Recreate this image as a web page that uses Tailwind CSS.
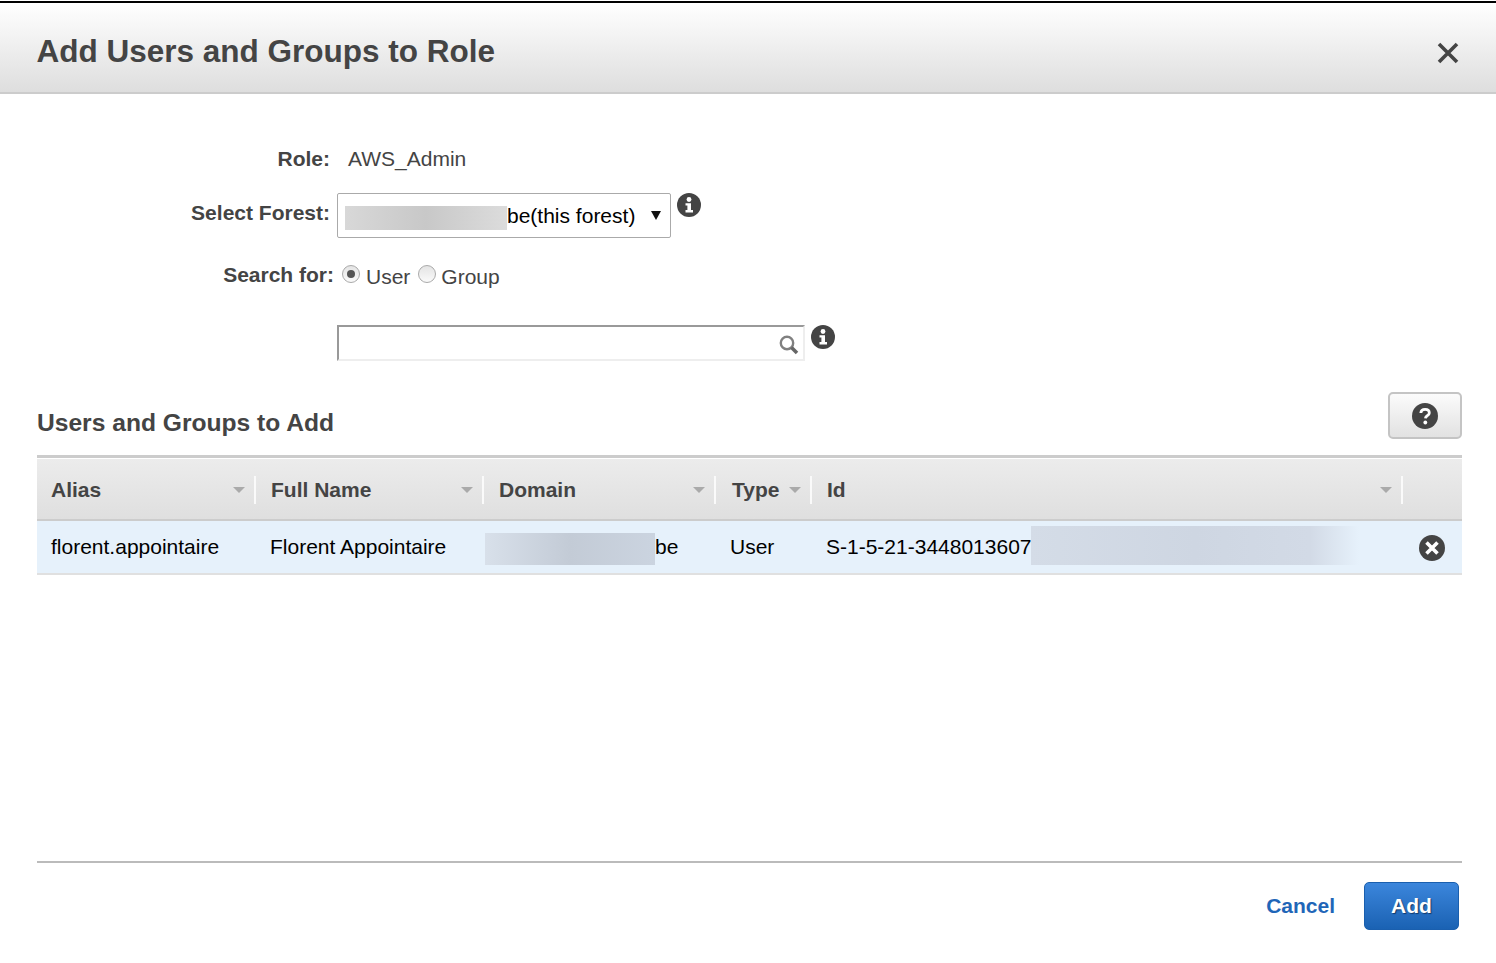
<!DOCTYPE html>
<html>
<head>
<meta charset="utf-8">
<script src="https://cdn.jsdelivr.net/npm/@tailwindcss/browser@4"></script>
</head>
<body class="bg-white font-['Liberation_Sans',Arial,sans-serif] text-[#444]">
<div class="w-[1496px] h-[963px] overflow-hidden flex flex-col">
  <div class="h-px shrink-0 bg-white"></div>
  <div class="h-[2px] shrink-0 bg-black"></div>
  <header class="h-[91px] shrink-0 flex items-center justify-between pl-[36.5px] pr-[36px] bg-gradient-to-b from-white to-[#dedede] border-b-2 border-[#ccc]">
    <h1 class="text-[31.5px] font-bold text-[#444] leading-none pt-[8px]">Add Users and Groups to Role</h1>
    <svg width="24" height="24" viewBox="0 0 24 24" class="mt-[10px]"><path d="M3 3L21 21M21 3L3 21" stroke="#444" stroke-width="3.6" fill="none"/></svg>
  </header>

  <main class="flex-1 flex flex-col px-[34px] pl-[37px]">
    <section class="mt-[49px] flex flex-col">
      <div class="h-8 flex items-center text-[21px]">
        <span class="w-[293px] text-right font-bold">Role:</span>
        <span class="ml-[18px]">AWS_Admin</span>
      </div>
      <div class="mt-[18px] h-[45px] flex items-start text-[21px]">
        <span class="w-[293px] text-right font-bold leading-[40px]">Select Forest:</span>
        <div class="ml-[7px] w-[334px] h-[45px] flex items-center border border-[#aaa] rounded-[2px] text-black">
          <span class="ml-[7px] mt-[5px] w-[162px] h-6 bg-gradient-to-r from-[#d8d8d8] via-[#c8c8c8] to-[#dcdcdc]"></span>
          <span class="mt-[1px]">be(this forest)</span>
          <svg width="10" height="9" viewBox="0 0 10 9" class="ml-[16px]"><path d="M0 0H10L5 9Z" fill="#111"/></svg>
        </div>
        <svg width="24" height="24" viewBox="0 0 24 24" class="ml-[6px]"><circle cx="12" cy="12" r="12" fill="#444"/><circle cx="12" cy="6.5" r="2.4" fill="#fff"/><path d="M8.5 10.2H14V17H16V19.5H8.5V17H10.4V12.6H8.5Z" fill="#fff"/></svg>
      </div>
      <div class="mt-[21px] h-8 flex items-center text-[21px]">
        <span class="w-[297px] text-right font-bold">Search for:</span>
        <span class="ml-[8px] mt-[-2px] w-[18px] h-[18px] rounded-full border border-[#aaa] bg-gradient-to-b from-[#e4e4e4] to-[#fafafa] flex items-center justify-center"><span class="w-2 h-2 rounded-full bg-[#555]"></span></span>
        <span class="ml-[6px] mt-[4px]">User</span>
        <span class="ml-[8px] mt-[-2px] w-[18px] h-[18px] rounded-full border border-[#aaa] bg-gradient-to-b from-[#e4e4e4] to-[#fafafa]"></span>
        <span class="ml-[5px] mt-[4px]">Group</span>
      </div>
      <div class="mt-[34px] ml-[300px] h-9 flex items-start">
        <div class="w-[468px] h-9 flex items-center justify-end pr-[4px] border-2 border-t-[#999] border-l-[#999] border-r-[#eee] border-b-[#eee]">
          <svg width="20" height="20" viewBox="0 0 20 20" class="mt-[3px]"><circle cx="8" cy="8" r="6.2" fill="none" stroke="#808080" stroke-width="2.4"/><path d="M12.5 12.5L18 18" stroke="#666" stroke-width="3.6"/></svg>
        </div>
        <svg width="24" height="24" viewBox="0 0 24 24" class="ml-[6px]"><circle cx="12" cy="12" r="12" fill="#444"/><circle cx="12" cy="6.5" r="2.4" fill="#fff"/><path d="M8.5 10.2H14V17H16V19.5H8.5V17H10.4V12.6H8.5Z" fill="#fff"/></svg>
      </div>
    </section>

    <section class="mt-[31px]">
      <div class="h-[47px] flex items-start justify-between">
        <h2 class="text-[24.6px] font-bold leading-none mt-[19px]">Users and Groups to Add</h2>
        <button class="w-[74px] h-[47px] flex items-center justify-center rounded-[5px] border-2 border-[#c4c4c4] bg-gradient-to-b from-[#fbfbfb] to-[#e2e2e2]">
          <svg width="26" height="26" viewBox="0 0 26 26" class="mt-[1px]"><circle cx="13" cy="13" r="13" fill="#444"/><path d="M8.8 10C9 7.6 10.8 6.4 13.1 6.4C15.6 6.4 17.3 7.8 17.3 9.9C17.3 12.6 13.6 12.8 13.4 15.4" fill="none" stroke="#fff" stroke-width="2.8"/><circle cx="13.3" cy="19.5" r="1.9" fill="#fff"/></svg>
        </button>
      </div>

      <div class="mt-[16px] border-t-[3px] border-[#ccc] pt-[1px] text-[21px]">
        <div class="h-[62px] pt-[1px] grid grid-cols-[219px_228px_232px_96px_591px_59px] items-center bg-gradient-to-b from-[#ececec] to-[#dfdfdf] border-b-2 border-[#ccc] font-bold">
          <div class="h-[28px] pl-[14px] pr-[9px] flex items-center justify-between border-r-2 border-[#fafafa]"><span>Alias</span><svg width="12" height="6" viewBox="0 0 12 6"><path d="M0 0H12L6 6Z" fill="#aaa"/></svg></div>
          <div class="h-[28px] pl-[15px] pr-[9px] flex items-center justify-between border-r-2 border-[#fafafa]"><span>Full Name</span><svg width="12" height="6" viewBox="0 0 12 6"><path d="M0 0H12L6 6Z" fill="#aaa"/></svg></div>
          <div class="h-[28px] pl-[15px] pr-[9px] flex items-center justify-between border-r-2 border-[#fafafa]"><span>Domain</span><svg width="12" height="6" viewBox="0 0 12 6"><path d="M0 0H12L6 6Z" fill="#aaa"/></svg></div>
          <div class="h-[28px] pl-[16px] pr-[9px] flex items-center justify-between border-r-2 border-[#fafafa]"><span>Type</span><svg width="12" height="6" viewBox="0 0 12 6"><path d="M0 0H12L6 6Z" fill="#aaa"/></svg></div>
          <div class="h-[28px] pl-[15px] pr-[9px] flex items-center justify-between border-r-2 border-[#fafafa]"><span>Id</span><svg width="12" height="6" viewBox="0 0 12 6"><path d="M0 0H12L6 6Z" fill="#aaa"/></svg></div>
          <div></div>
        </div>
        <div class="h-[54px] grid grid-cols-[219px_228px_232px_96px_591px_59px] items-center bg-[#e6f1fb] border-b-2 border-[#e0e0e0] text-black">
          <div class="pl-[14px]">florent.appointaire</div>
          <div class="pl-[14px]">Florent Appointaire</div>
          <div class="flex items-center pl-[1px]"><span class="w-[170px] h-8 mt-[4px] bg-gradient-to-r from-[#d8e0ea] via-[#c3cbd6] to-[#cbd4e0]"></span><span>be</span></div>
          <div class="pl-[14px]">User</div>
          <div class="pl-[14px] flex items-center whitespace-nowrap"><span>S-1-5-21-3448013607</span><span class="w-[328px] h-[39px] ml-[-1px] mt-[-3px] bg-[linear-gradient(90deg,#d4dce7,#ced6e2_50%,#d2dae6_85%,#e6f1fb)]"></span></div>
          <div class="flex justify-end pr-[17px]">
            <svg width="26" height="26" viewBox="0 0 26 26" class="mt-[2px]"><circle cx="13" cy="13" r="13" fill="#444"/><path d="M7.5 7.5L18.5 18.5M18.5 7.5L7.5 18.5" stroke="#fff" stroke-width="3.6"/></svg>
          </div>
        </div>
      </div>
    </section>

    <footer class="mt-auto mb-[33px]">
      <div class="border-t-2 border-[#bbb]"></div>
      <div class="mt-[19px] h-12 flex items-center justify-end pr-[3px]">
        <a class="text-[21px] font-bold text-[#1f66b8]">Cancel</a>
        <button class="ml-[29px] w-[95px] h-12 rounded-[5px] border border-[#1a5fae] bg-gradient-to-b from-[#3b86dc] to-[#1a62b3] text-white text-[21px] font-bold [text-shadow:1px_1px_1px_#123a6b]">Add</button>
      </div>
    </footer>
  </main>
</div>
</body>
</html>
